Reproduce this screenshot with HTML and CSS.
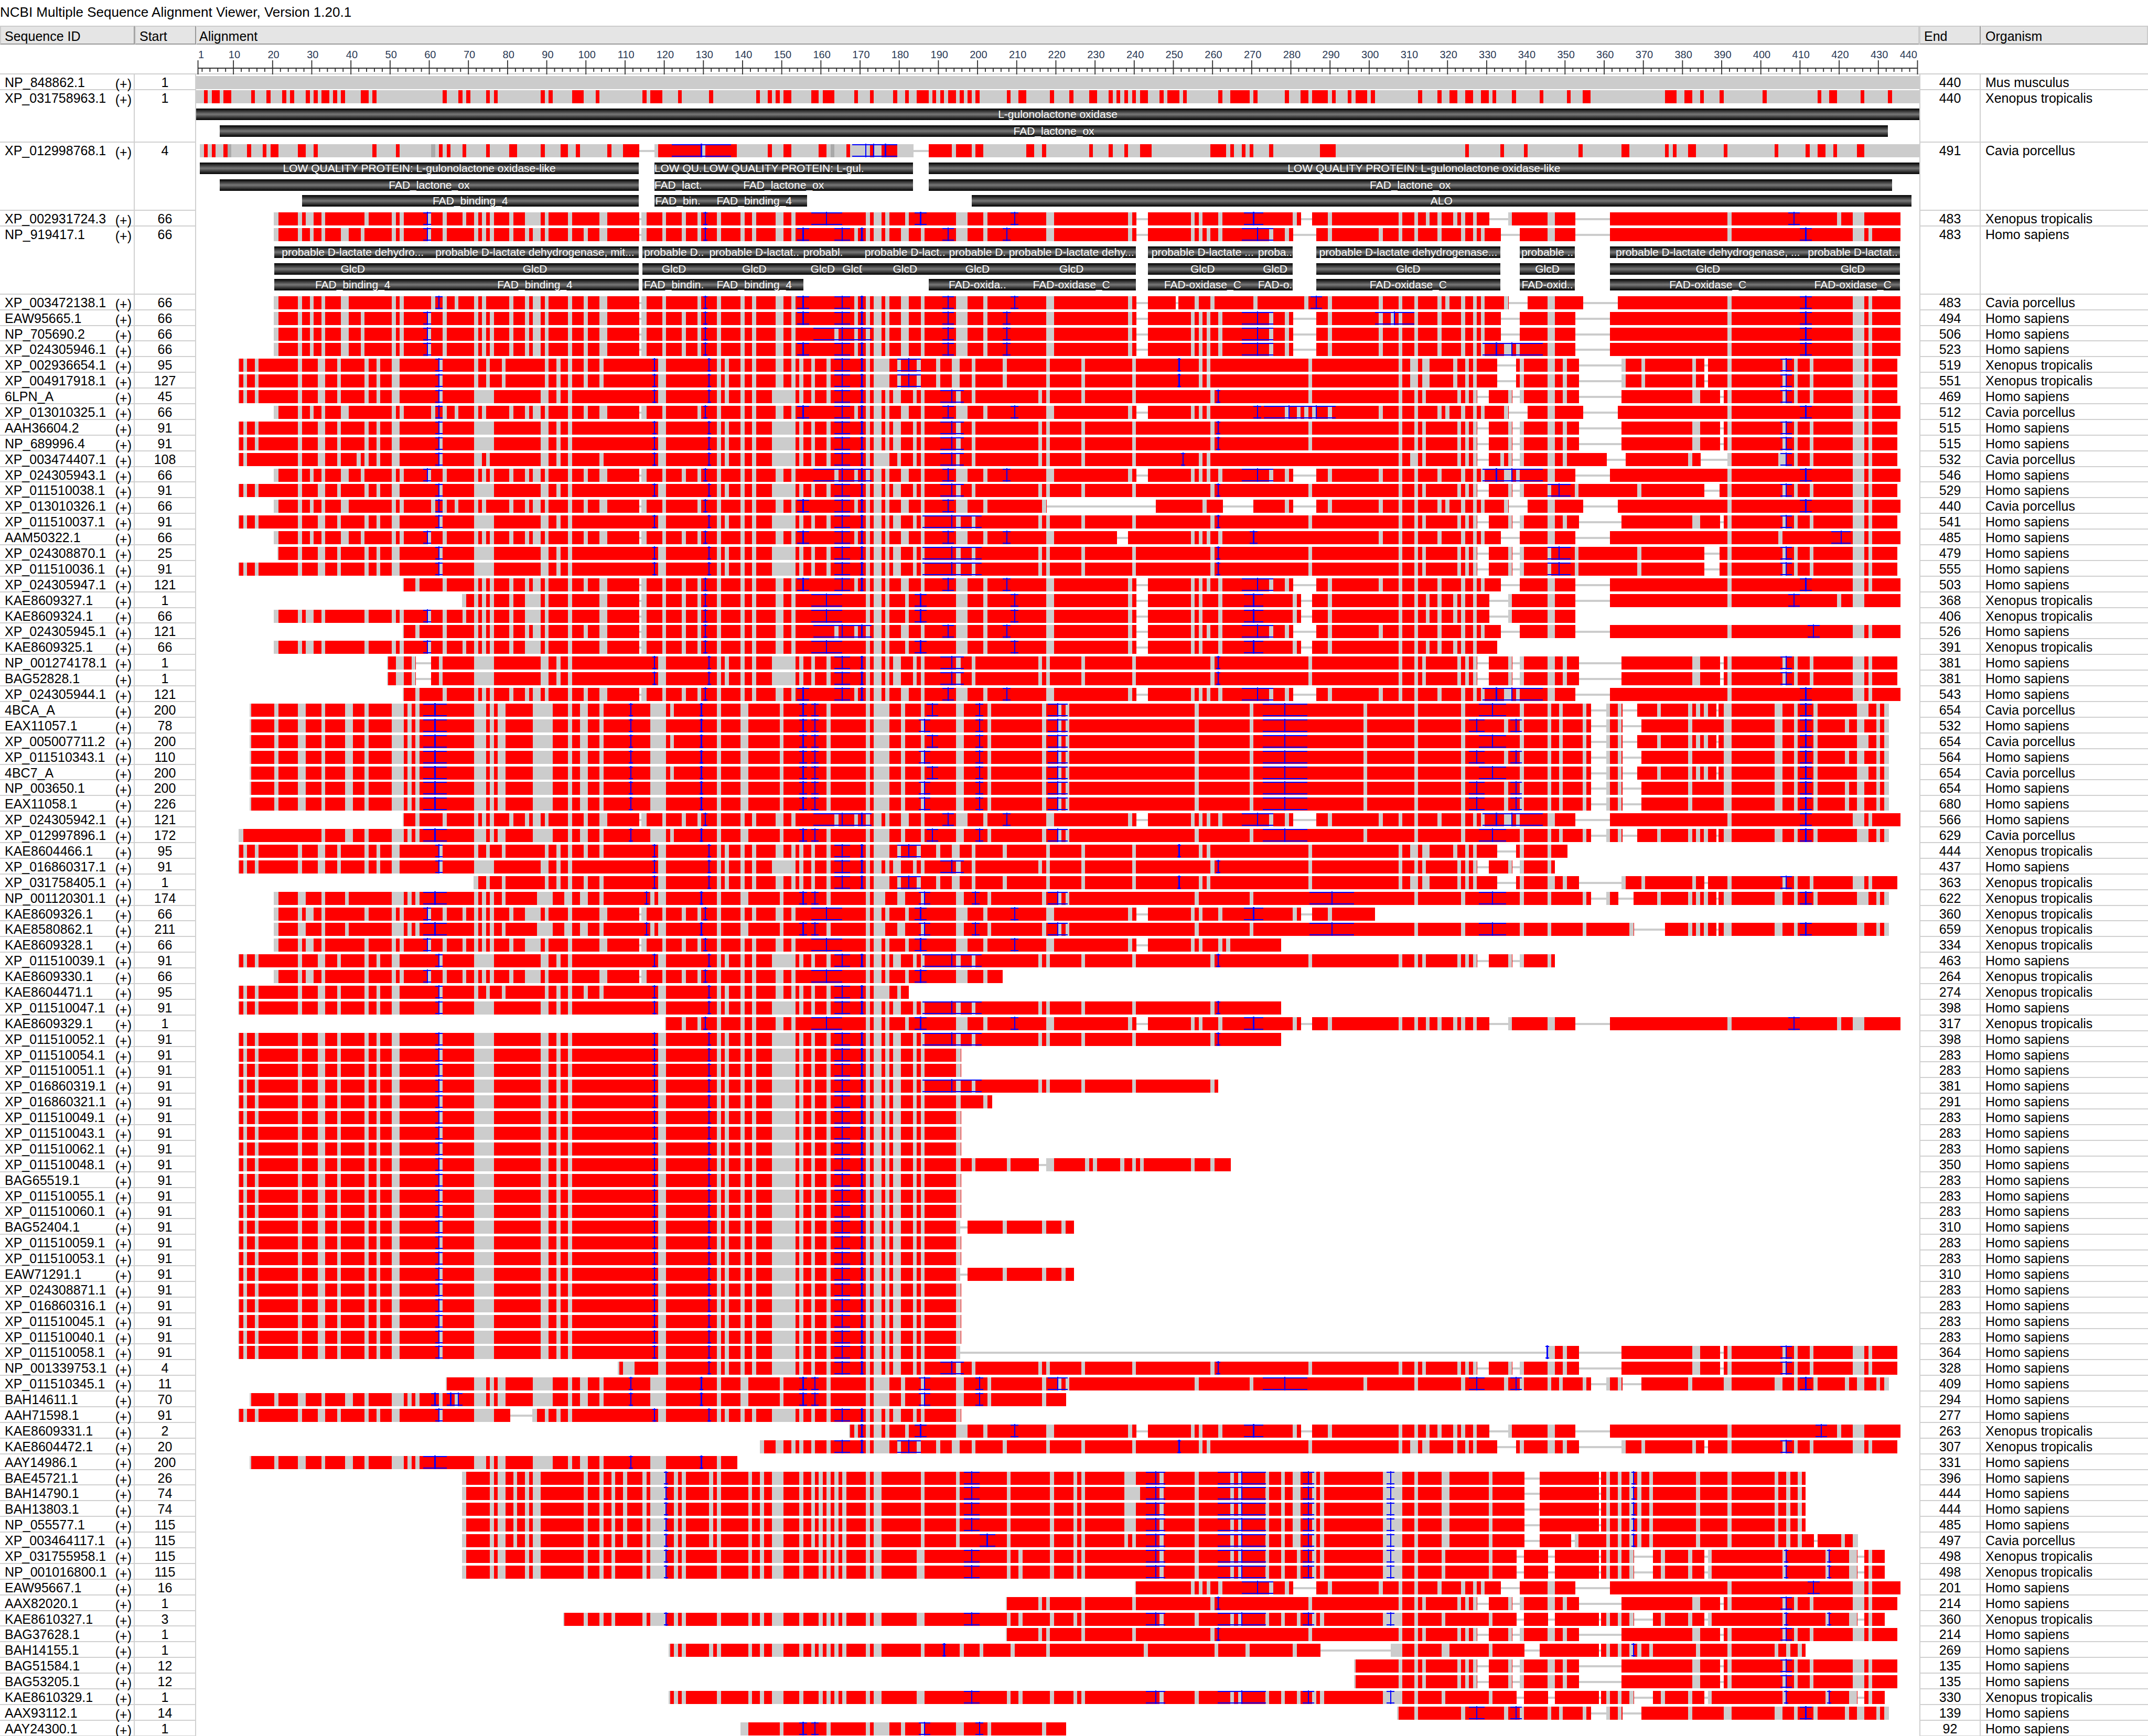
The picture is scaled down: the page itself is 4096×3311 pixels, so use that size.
FILE: index.html
```html
<!DOCTYPE html>
<html lang="en">
<head>
<meta charset="utf-8">
<title>NCBI Multiple Sequence Alignment Viewer</title>
<link rel="stylesheet" href="styles.css">
</head>
<body>
<h1 class="title">NCBI Multiple Sequence Alignment Viewer, Version 1.20.1</h1>
<table class="msa">
  <thead class="head">
    <tr class="row head-row">
      <th class="head-cell" scope="col">Sequence ID</th>
      <th class="head-cell" scope="col">Start</th>
      <th class="head-cell head-wide head-align" scope="col">Alignment</th>
      <th class="head-cell" scope="col">End</th>
      <th class="head-cell head-wide" scope="col">Organism</th>
    </tr>
    <tr class="row ruler-row">
      <td></td>
      <td></td>
      <td class="ruler" id="ruler"></td>
      <td></td>
      <td></td>
    </tr>
  </thead>
  <tbody class="body" id="rows"></tbody>
</table>
<script src="viewer.js"></script>
</body>
</html>
```
FILE: styles.css
```css
* {
  box-sizing: border-box;
}

body {
  margin: 0;
  min-height: 100vh;
  display: flex;
  flex-direction: column;
  background: #fff;
  color: #000;
  font-family: "Liberation Sans", Arial, sans-serif;
  font-size: 25px;
  line-height: 24px;
}

.title {
  margin: 0;
  height: 49px;
  padding-top: 11px;
  font-size: 26px;
  font-weight: 400;
}

.msa {
  flex: 1;
  display: flex;
  flex-direction: column;
}

.head {
  display: block;
}

.body {
  flex: 1;
  display: flex;
  flex-direction: column;
}

.row {
  display: grid;
  grid-template-columns: 257px 117px minmax(0, 1fr) 117px 319px;
}

.body .row {
  flex: 1 1 29px;
}

.body .row.annotated {
  flex: none;
}

td,
th {
  padding: 0;
}

/* header */

.head-cell {
  height: 36px;
  padding: 6px 0 0 7px;
  background: #e5e5e5;
  border: 2px solid #ccc;
  border-right-color: #999;
  border-bottom-color: #999;
  font-weight: 400;
  text-align: left;
}

.head-wide {
  border-right-color: #ccc;
  border-left-color: #e5e5e5;
}

.head-align {
  padding-left: 4px;
}

.ruler-row {
  height: 57px;
  border-bottom: 2px solid #d0d0d0;
}

.ruler {
  padding-top: 8px;
}

.scale {
  display: grid;
  grid-template-columns: repeat(440, minmax(0, 1fr));
  height: 22px;
  color: #2b3a55;
  font-size: 20px;
  line-height: 22px;
}

.mark {
  grid-row: 1;
  display: flex;
  justify-content: center;
  padding-left: 4px;
}

.mark.first {
  justify-content: flex-start;
}

.mark.last {
  justify-content: flex-end;
  padding-right: 4px;
}

.ticks {
  display: block;
  width: 100%;
  height: 27px;
  fill: #333;
}

/* sequence rows */

.id,
.start,
.end,
.organism {
  padding-top: 3px;
  border-bottom: 2px solid #d0d0d0;
}

.id,
.start,
.end {
  border-right: 2px solid #d0d0d0;
}

.id {
  display: flex;
  justify-content: space-between;
  padding-left: 9px;
  padding-right: 4px;
}

.strand {
  padding-top: 6px;
  line-height: 18px;
}

.start,
.end {
  text-align: center;
}

.end {
  border-left: 2px solid #d0d0d0;
}

.organism {
  padding-left: 9px;
}

.align {
  padding-top: 3px;
}

.annotated .align {
  padding-bottom: 8px;
}

/* the first annotated row sits tight under the anchor row */
.annotated:nth-child(2) .align {
  padding-top: 0;
  padding-bottom: 11px;
}

.track {
  display: block;
  width: 100%;
  height: 25px;
  overflow: visible;
  shape-rendering: crispEdges;
}

.match {
  fill: #ccc;
}

.diff {
  fill: #f00;
}

.unknown {
  fill: #a9a9a9;
}

.blank {
  fill: #fff;
}

.insert {
  fill: #00f;
}

.features {
  display: grid;
  grid-template-columns: repeat(440, minmax(0, 1fr));
  margin-top: 10px;
}

.features:nth-of-type(3) {
  margin-top: 8px;
}

.feature {
  grid-row: 1;
  height: 22px;
  overflow: hidden;
  display: flex;
  justify-content: safe center;
  background: linear-gradient(#000, #777 50%, #000);
  color: #fff;
  font-size: 21px;
  line-height: 22px;
  white-space: nowrap;
}
```
FILE: viewer.js
```js
// Track notation, in alignment columns:
//   12      one grey column from 12        31:2   two grey columns from 31
//   x353:11 unaligned gap                  r / d  red or dark grey run
//   62~1    insertion at 62, caps 1 wide   165~157~172  insertion with its own caps
const PLc = "133 135 139 142 147:6 154 157 161 131~.5 118:2";
const PLb = "92 95 117~.5 " + PLc;
const PL = "12 15 26 31:2 36 43 46 50:2 62 62~1 71:5 88:2 " + PLb;
const PMs = " 165~2 170~.5 171 173:2 176 178:2 183 185 194:1.2 ";
const PMx = "198 215 217 226 239 259 284 ";
const PM = PMs + PMx + "261~.5 ";
const N3 = " 193~3 ", W = " 193~7.6 ";
const PRa = " 307 311 313 322 324 326 x327:3 335 x336:2 338 ";
const PT = " 391 405 408 412 423:3 427 406~1.5";
const PRb = "345:2 349 x353:11 382:2 x389" + PT;
const PR = PRa + PRb;
const PR2 = PRa + "345 348~3 352 368 x385:4" + PT;

const QL = "20 26 28:2 32 43 50 52 59 63 68 71 73 75 80 84:4 89 95 103:2 x113:.7 113.7:1.3 119 124 128 133 139 142 148:2 152 59~1 130~.5 ";
const QMa = "161~4 171 173:2 176 181 194:3 201 217:2 238 x240:3 254 256 261 185~1.5 209~1 ";
const QM = QMa + "280 x282:3 289 270~2.5 ";
const QRa = "307 311 314 317 321 323 326 x330:5 335 345:2 x352:9 391 419 423:3 ";
const QR = QRa + "408~1.5";

const H2 = "63 71 73 75 80 84 86:2 89 95 99 103:2 x113:.7 113.7:1.3 119 124 128 133 139 142 148:2 152 130~.5 ";
const HL = "20 26 29 32 37:2 42 50 52 59 59~1 " + H2;
const HB = "155~1.5 165~2 170~.5 ";
const HW = "163 165~157.6~172.4 170~.5 ";
const HMa = "168 171 173:2 176 180:2 185 194:3 201 192~1.5 ";
const HMb = "254 256 258 261 274 278 x280:6 289 271~4 ";
const HM = HMa + "207~1 217:2 238 x240:3 " + HMb;
const HR = "302 307 311 317 323 326 328 x333:5 345:2 x352:9 391 423:3 427 ";
const HR2 = "302 307 311 317 323 326 328 334:2 337 345:2 x352:9 391 423:3 427 332~328.5~343.8 336~.3 411~1.5";
const H5 = "411~1.5";

const CL = "20 26 29 32 37:2 50 52 60 62~1 63 66 71 73 80 84 86:2 89 95 99 103:2 x113:.7 113.7:1.3 119 128 133 139 142 148:2 152 130~.5 ";
const CM = HB + HMa + "209~1 217:2 238 x240:3 ";
const CR = "302 307 311 317 319 323 326 328 334 x335:5 345:2 x354:9 391 423:3 427 411~1.5";

const XL = "12 15 26 31:2 36 43 46 50:2 62 62~1 71 74 78 89 92 95 99 103 118:2 133 135 139 142 148:2 152 154 157 161 117~.5 131~.5 165~2 170~.5 ";
const XM = "171 173:4 179 184 189 193:2 198 206 217 226 239 256 258 284 182~3 251~.5 ";
const XR = "307 310:2 313:2 321 324 326 x332:5 338 345:2 349 x353:11 364 369 382 x385" + PT;

const B3 = "71:3 75 77:2 86:5 95 98:2 103 116:4 133 139:2 149 111~.5 129~.5 155~1 158~1 ";
const B2 = "32 38:2 43 50:3 54 56 61~3 " + B3;
const BL = "20 26:2 " + B2;
const BMa = "161 171 173:4 180 185 194:2 202 216 200~1 ";
const BM = BMa + "220 222 255 269 298 220~2.5 278~5.7 ";
const BC = "188~1.5 121 ", BE = "186~1.5 ";
const BRC = "311 323 338 345 348 354 x356:4 360 363 x364:4 373 381 383 385 x388:.7 390:2 403:2 408 413 424:3 429 431:2 331~3.5 411~1.5";
const BRE = "311 323 334 338 345 348 354 x356:4 360 363 x364:5 381 390:2 403:2 408 413 421 424:2 429 431:2 327~2 337~1.5 411~1.5";

const NL = "20 26:2 32 38 50:3 54 56 71 73 75 78 87:4 94:2 98:2 103 116 118:2 133 139:2 149 61~3 115~.5 129~.5 155~1 158~1 161 171 173:3 179:2 185 194:2 202 216 220 222 255 269 186~1.5 199~1 220~2.5 290~5.7 311 323 338 345 354 381 383 385 x388:.7 390:2 403:2 408 429 431:2 331~3.5 411~1.5 ";

const AL = "68 75 77:2 81 84 86:2 99 103 106 109 114 116:4 122 124 131 133 141 144 147:3 154 157 159 161 163 165 171 173:2 185 ";
const AMb = "207 218 224 226 237 239 246 255 264 266 273 277 280:2 285 287 303:5 311 318:2 330 x339:4 245~2.5 267~6.1 284~1.5 305~1 ";
const AM = "120~.5 194 198~2 238 " + AMb;
const ARb = "360 363 366 368 371 383 391 403 406 409 367~.5 ";
const AR = "x358:.7 " + ARb;
const Z = "68 75 77:2 84 86:2 99 103 106 114 116:4 122 124 133 141 144 147:3 154 159 161 163 165 171 173:2 184:2 207 210 218 224 226 246 255 264 266 273 277 281 285 287 303:5 311 318 330 x337:2 x345:2 x358:.7 360 363 366 x367:5 374 381 x385 386 405 416 422:2 x424:2 427 198~2 245~2.5 267~6.1 284~1.5 305~1 406~.5 417~.5 ";
const Z120 = Z + "120~.5";

const M = "Mus musculus", X = "Xenopus tropicalis", C = "Cavia porcellus", H = "Homo sapiens";
const P0 = 10.7, PE = 434.4, HE = 435.2, BE0 = 13.7, BEnd = 432.3;
const short = id => [id, 91, 283, H, P0, 195.3, PL + PMs];

// id, start, end, organism, first column, last column, track, feature lanes
const ROWS = [
  ["NP_848862.1", 1, 440, M, 0, 440, "0:440"],
  ["XP_031758963.1", 1, 440, X, 0, 440,
    "0:440 r2 r4:2 r7:2 r14 r18 r22 r24 r28 r30 r32:2 r35 r37 r42:2 r45 r63 r67 r69 r74 r76 r88 r90 r96:3 r102 r114 r116:3 r123 r131 r143 r146 r148 r150:2 r157:2 r160:3 r168 r172 r178 r181 r184:3 r188 r190 r192:2 r195 r197 r199 r207 r210:2 r218 r223 r228:2 r233 r235 r237 r239 r241:2 r246 r248:3 r252 r261 r264:5 r270 r278 r282:2 r285:4 r290 r294 r296:3 r300 r312 r317 r320:2 r324:2 r328:2 r331 r336 r343 r350 r354:2 r375:3 r380:2 r384 r389 r400 r414 r417:2 r425 r432",
    [
      [[0, 440, "L-gulonolactone oxidase"]],
      [[6, 432, "FAD_lactone_ox"]],
    ]],
  ["XP_012998768.1", 4, 491, C, 1, 440,
    "1:439 r2 r4 r7 d8 r13 r17 r19:2 r26:2 r30 r45 r51 d60 r62 r64 r68 r74 r80:2 r88 r93:2 r97 r105 r109:5 x113:4 r118:11 r130:8 129~7.6 r146 r150:2 r159:2 d162 r166 r172 r175:4 171~167.5~179 173~.3 176~.3 x183:4 r187:6 r194:4 r199:2 r212:2 r216 r228 r233 r237 r241:3 r259:4 r264 r267 r269 r274 r287:4 r324 r333 r339 r353 r364:2 r375 r377 r381:2 r390 r403 r411 r414:2 r418 r424:2",
    [
      [[1, 113, "LOW QUALITY PROTEIN: L-gulonolactone oxidase-like"], [117, 129, "LOW QU."], [129, 171, "LOW QUALITY PROTEIN: L-gul."], [171, 183, ""], [187, 440, "LOW QUALITY PROTEIN: L-gulonolactone oxidase-like"]],
      [[6, 113, "FAD_lactone_ox"], [117, 129, "FAD_lact."], [129, 171, "FAD_lactone_ox"], [171, 183, ""], [187, 433, "FAD_lactone_ox"]],
      [[27, 113, "FAD_binding_4"], [117, 129, "FAD_bin."], [129, 156, "FAD_binding_4"], [198, 438, "ALO"]],
    ]],
  ["XP_002931724.3", 66, 483, X, 19.8, HE, QL + QM + QR],
  ["NP_919417.1", 66, 483, H, 19.8, HE, HL + HB + HM + HR + H5,
    [
      [[20, 60, "probable D-lactate dehydro..."], [60, 113, "probable D-lactate dehydrogenase, mit..."], [114, 130, "probable D.."], [130, 155, "probable D-lactat.."], [155, 165, "probabl."], [165, 170, ""], [170, 192, "probable D-lact.."], [192, 207, "probable D."], [207, 240, "probable D-lactate dehy..."], [243, 271, "probable D-lactate ..."], [271, 280, "proba.."], [286, 333, "probable D-lactate dehydrogenase..."], [338, 352, "probable .."], [361, 411, "probable D-lactate dehydrogenase, ..."], [411, 435, "probable D-lactat.."]],
      [[20, 60, "GlcD"], [60, 113, "GlcD"], [114, 130, "GlcD"], [130, 155, "GlcD"], [155, 165, "GlcD"], [165, 170, "GlcD"], [170, 192, "GlcD"], [192, 207, "GlcD"], [207, 240, "GlcD"], [243, 271, "GlcD"], [271, 280, "GlcD"], [286, 333, "GlcD"], [338, 352, "GlcD"], [361, 411, "GlcD"], [411, 435, "GlcD"]],
      [[20, 60, "FAD_binding_4"], [60, 113, "FAD_binding_4"], [114, 130, "FAD_bindin."], [130, 155, "FAD_binding_4"], [187, 192, ""], [192, 207, "FAD-oxida.."], [207, 240, "FAD-oxidase_C"], [243, 271, "FAD-oxidase_C"], [271, 280, "FAD-o."], [286, 333, "FAD-oxidase_C"], [338, 352, "FAD-oxid.."], [361, 411, "FAD-oxidase_C"], [411, 435, "FAD-oxidase_C"]],
    ]],
  ["XP_003472138.1", 66, 483, C, 19.8, HE, CL + CM + "x250:.8 255 259 270 283 286~1.5 289 " + CR],
  ["EAW95665.1", 66, 494, H, 19.8, HE, HL + HB + HM + HR + "305 306~5 " + H5],
  ["NP_705690.2", 66, 506, H, 19.8, HE, HL + HW + HM + HR + H5],
  ["XP_024305946.1", 66, 523, H, 19.8, HE, HL + HB + HM + HR2],
  ["XP_002936654.1", 95, 519, X, P0, PE, XL + XM + XR],
  ["XP_004917918.1", 127, 551, X, P0, PE, XL + XM + XR],
  ["6LPN_A", 45, 469, H, P0, PE, PL + PM + N3 + PR],
  ["XP_013010325.1", 66, 512, C, 19.8, HE, CL + CM + "254 256 258 271~1 278 281 283 285 289 279~272.6~291 286~.3 " + CR],
  ["AAH36604.2", 91, 515, H, P0, PE, PL + PM + N3 + PR],
  ["NP_689996.4", 91, 515, H, P0, PE, PL + PM + N3 + PR],
  ["XP_003474407.1", 108, 532, C, P0, PE, "12 26 31:2 36 41 43 46 50:2 62 62~1 71:2 74 88:2 103 " + PLb + " 165~2 170~.5 171 173:4 179 183 185 194 198 215 217 226 239 256 258 193~3 252~.5 307 310:2 313 322 324 326 x327:3 333 335 x336:2 338 345:2 349 x360:5 381 x384:7 404" + PT],
  ["XP_024305943.1", 66, 546, H, 19.8, HE, HL + HW + HM + HR2],
  ["XP_011510038.1", 91, 529, H, P0, PE, PL + PM + N3 + PR2],
  ["XP_013010326.1", 66, 440, C, 19.8, HE, CL + HB + HMa + "216 x217:28 257 x262:8 278 x280:6 289 " + CR],
  ["XP_011510037.1", 91, 541, H, P0, PE, PL + PM + W + PR],
  ["AAM50322.1", 66, 485, H, 19.8, HE, HL + HB + HMa + "207~1 217:2 x235:3 254 256 258 261 270~1 404 420~2.5 " + HR],
  ["XP_024308870.1", 25, 479, H, 20.7, PE, PL + PM + W + PR2],
  ["XP_011510036.1", 91, 555, H, P0, PE, PL + PM + W + PR2],
  ["XP_024305947.1", 121, 503, H, 52.8, HE, "56 " + H2 + HB + HM + HR + H5],
  ["KAE8609327.1", 1, 368, X, 67.9, HE, "68 " + QL.replace("68 ", "") + QM + QR],
  ["KAE8609324.1", 66, 406, X, 19.8, 352.2, QL + QM + QR],
  ["XP_024305945.1", 121, 526, H, 52.8, HE, "56 " + H2 + HW + HM + HR + "413~1.5"],
  ["KAE8609325.1", 66, 391, X, 19.8, 332.2, QL + QM + "307 311 314 317 321 323 326"],
  ["NP_001274178.1", 1, 381, H, 48.7, PE, "51:2 55 x56:4 62 71:5 88:2 " + PLb + PM + N3 + PR],
  ["BAG52828.1", 1, 381, H, 48.7, PE, "51:2 55 x56:4 62 71:5 88:2 " + PLb + PM + N3 + PR],
  ["XP_024305944.1", 121, 543, H, 52.8, HE, "56 " + H2 + HB + HM + HR2],
  ["4BCA_A", 200, 654, C, BE0, BEnd, BL + BM + BC + BRC],
  ["EAX11057.1", 78, 532, H, BE0, BEnd, BL + BM + BE + BRE],
  ["XP_005007711.2", 200, 654, C, BE0, BEnd, BL + BM + BC + BRC],
  ["XP_011510343.1", 110, 564, H, BE0, BEnd, BL + BM + BE + BRE],
  ["4BC7_A", 200, 654, C, BE0, BEnd, BL + BM + BC + BRC],
  ["NP_003650.1", 200, 654, H, BE0, BEnd, BL + BM + BE + BRE],
  ["EAX11058.1", 226, 680, H, BE0, BEnd, BL + BM + BE + BRE],
  ["XP_024305942.1", 121, 566, H, 52.8, HE, "56 " + H2 + HW + HM + HR2],
  ["XP_012997896.1", 172, 629, C, 10.9, BEnd, "11 " + B2 + BM + BC + BRC],
  ["KAE8604466.1", 95, 444, X, P0, 350.2, XL + XM + "307 310:2 313:2 321 324 326 x332:5 338 345"],
  ["XP_016860317.1", 91, 437, H, P0, 347, PL + PM + N3 + PRa + "345"],
  ["XP_031758405.1", 1, 363, X, 70.9, PE, XL + XM + XR.replace("321", "322")],
  ["NP_001120301.1", 174, 622, X, 19.8, BEnd, NL + "x356:4 360 x363:4 373 413 424:3"],
  ["KAE8609326.1", 66, 360, X, 19.8, 301, QL + QM],
  ["KAE8580862.1", 211, 659, X, 19.8, BEnd, NL + "366 x367:8 424:2"],
  ["KAE8609328.1", 66, 334, X, 19.8, 277, QL + QMa + "263"],
  ["XP_011510039.1", 91, 463, H, P0, 347, PL + PM + W + PRa + "345"],
  ["KAE8609330.1", 66, 264, X, 19.8, 206, QL + QMa],
  ["KAE8604471.1", 95, 274, X, P0, 182, XL + "171 173:4 179"],
  ["XP_011510047.1", 91, 398, H, P0, 277, PL + PM + W],
  ["KAE8609329.1", 1, 317, X, 119.7, HE, QL + QM + QR],
  ["XP_011510052.1", 91, 398, H, P0, 277, PL + PM + W],
  short("XP_011510054.1"),
  short("XP_011510051.1"),
  ["XP_016860319.1", 91, 381, H, P0, 261, PL + PMs + PMx + W],
  ["XP_016860321.1", 91, 291, H, P0, 203.2, PL + PMs + "201"],
  short("XP_011510049.1"),
  short("XP_011510043.1"),
  short("XP_011510062.1"),
  ["XP_011510048.1", 91, 350, H, P0, 264.2, PL + PMs + "198 207 x215:2 217:2 227 229 236 239 241 254 259"],
  short("BAG65519.1"),
  short("XP_011510055.1"),
  short("XP_011510060.1"),
  ["BAG52404.1", 91, 310, H, P0, 224.2, PL + PMs + "x195:2 206 216 221"],
  short("XP_011510059.1"),
  short("XP_011510053.1"),
  ["EAW71291.1", 91, 310, H, P0, 224.2, PL + PMs + "x195:2 206 216 221"],
  short("XP_024308871.1"),
  short("XP_016860316.1"),
  short("XP_011510045.1"),
  short("XP_011510040.1"),
  ["XP_011510058.1", 91, 364, H, P0, PE, PL + PMs + "x195:150 345~.5 " + PRb],
  ["NP_001339753.1", 4, 328, H, 107.7, PE, "109:3 " + PLc + PM + N3 + PR],
  ["XP_011510345.1", 11, 409, H, 63.7, BEnd, B3 + BM + BE + BRE],
  ["BAH14611.1", 70, 294, H, BE0, 222.2, "20 26:2 32 38:2 43 50:3 54 56 62 66 61~1 65~1 67~1 " + B3 + BMa + BE],
  ["AAH71598.1", 91, 277, H, P0, 195.3, "12 15 26 31:2 36 43 46 50:2 62 62~1 71:5 x80:5.8 85.8:1.2 89 " + PLb + PMs],
  ["KAE8609331.1", 2, 263, X, 166.7, HE, "168 170~.5 " + QM + QRa + "415~1.5"],
  ["KAE8604472.1", 20, 307, X, 143.9, PE, "144 " + XL + XM + XR],
  ["AAY14986.1", 200, 331, H, BE0, 138.2, BL],
  ["BAE45721.1", 26, 396, H, 67.9, 411, AL + AM + AR],
  ["BAH14790.1", 74, 444, H, 67.9, 411, AL + AM + AR + "240"],
  ["BAH13803.1", 74, 444, H, 67.9, 411, AL + AM + AR],
  ["NP_055577.1", 115, 485, H, 67.9, 411, AL + AM + AR],
  ["XP_003464117.1", 115, 497, C, 67.9, 424.3, AL + "120~.5 194 202~2 " + AMb + "x351 352 " + ARb + "x413 420 423:2"],
  ["XP_031755958.1", 115, 498, X, 67.9, 431.2, Z120],
  ["NP_001016800.1", 115, 498, X, 67.9, 431.2, Z120],
  ["EAW95667.1", 16, 201, H, 239.7, HE, HMb + HR + "413~1.5"],
  ["AAX82020.1", 1, 214, H, 206.7, PE, PM + PR],
  ["KAE8610327.1", 3, 360, X, 93.7, 431.2, Z120],
  ["BAG37628.1", 1, 214, H, 206.7, PE, PM + PR],
  ["BAH14155.1", 1, 269, H, 120.7, 411, AL + "191~.5 195 200 208 217 242 260 268 280 x287:18 305:3 311 318:2 330 x339:4 " + AR],
  ["BAG51584.1", 12, 135, H, 295.7, PE, PR],
  ["BAG53205.1", 12, 135, H, 295.7, PE, PR],
  ["KAE8610329.1", 1, 330, X, 120.7, 431.2, Z],
  ["AAX93112.1", 14, 139, H, 306.7, BEnd, BRE],
  ["AAY24300.1", 1, 92, H, 139, 222.2, B3 + BMa + BE],
];

const box = (x, y, w, h) => `M${x} ${y}h${w}v${h}h${-w}z`;

function track(from, to, spec) {
  const paths = { match: "", diff: box(from, 0, to - from, 25), over: "", unknown: "", blank: "", line: "", insert: "" };
  const lead = Math.ceil(from);
  if (lead > from) paths.match += box(from, 0, lead - from, 25);
  for (const token of spec.trim().split(/\s+/)) {
    if (token.includes("~")) {
      const [stem, a, b] = token.split("~").map(Number);
      if (stem < from || stem > to) continue;
      const left = b ? a : stem - a;
      const right = b || stem + a;
      paths.insert += box(left, 0, right - left, 2) + box(left, 22, right - left, 2) + box(stem - 0.15, -1, 0.3, 26);
      continue;
    }
    const kind = /[xrd]/.test(token[0]) ? token[0] : "";
    const [s, n = 1] = token.slice(kind.length).split(":").map(Number);
    const begin = Math.max(s + (kind === "x" ? 0.15 : 0), from);
    const width = Math.min(s + n, to) - begin;
    if (width <= 0) continue;
    if (kind === "x") {
      paths.blank += box(begin, 0, width, 25);
      paths.line += box(begin, 11, width, 4);
    } else {
      paths[{ "": "match", r: "over", d: "unknown" }[kind]] += box(begin, 0, width, 25);
    }
  }
  const draw = (name, cls) => paths[name] ? `<path class="${cls}" d="${paths[name]}"/>` : "";
  return `<svg class="track" viewBox="0 0 440 25" preserveAspectRatio="none" aria-hidden="true">` +
    draw("diff", "diff") + draw("match", "match") + draw("over", "diff") + draw("unknown", "unknown") +
    draw("blank", "blank") + draw("line", "match") + draw("insert", "insert") + "</svg>";
}

function lane(pieces) {
  return `<div class="features">` + pieces.map(([a, b, label]) =>
    `<div class="feature" style="grid-column:${a + 1} / ${b + 1}">${label}</div>`).join("") + "</div>";
}

document.getElementById("rows").innerHTML = ROWS.map(([id, start, end, organism, from, to, spec, lanes = []]) =>
  `<tr class="row${lanes.length ? " annotated" : ""}">` +
  `<td class="id"><span>${id}</span><span class="strand">(+)</span></td>` +
  `<td class="start">${start}</td>` +
  `<td class="align">${track(from, to, spec)}${lanes.map(lane).join("")}</td>` +
  `<td class="end">${end}</td>` +
  `<td class="organism">${organism}</td></tr>`).join("");

// ruler: a long tick every ten columns, a short one every two
let ticks = box(0.35, 14, 439.2, 2) + box(0.35, 0, 0.25, 27);
let marks = `<span class="mark first" style="grid-column:1 / 6">1</span>`;
for (let p = 2; p <= 440; p += 2) {
  ticks += p % 10 ? box(p - 0.6, 14, 0.25, 8) : box(p - 0.6, 0, 0.25, 27);
}
for (let p = 10; p <= 430; p += 10) {
  marks += `<span class="mark" style="grid-column:${p - 4} / ${p + 5}">${p}</span>`;
}
marks += `<span class="mark last" style="grid-column:432 / 441">440</span>`;
document.getElementById("ruler").innerHTML = `<div class="scale">${marks}</div>` +
  `<svg class="ticks" viewBox="0 0 440 27" preserveAspectRatio="none" aria-hidden="true"><path d="${ticks}"/></svg>`;
```
